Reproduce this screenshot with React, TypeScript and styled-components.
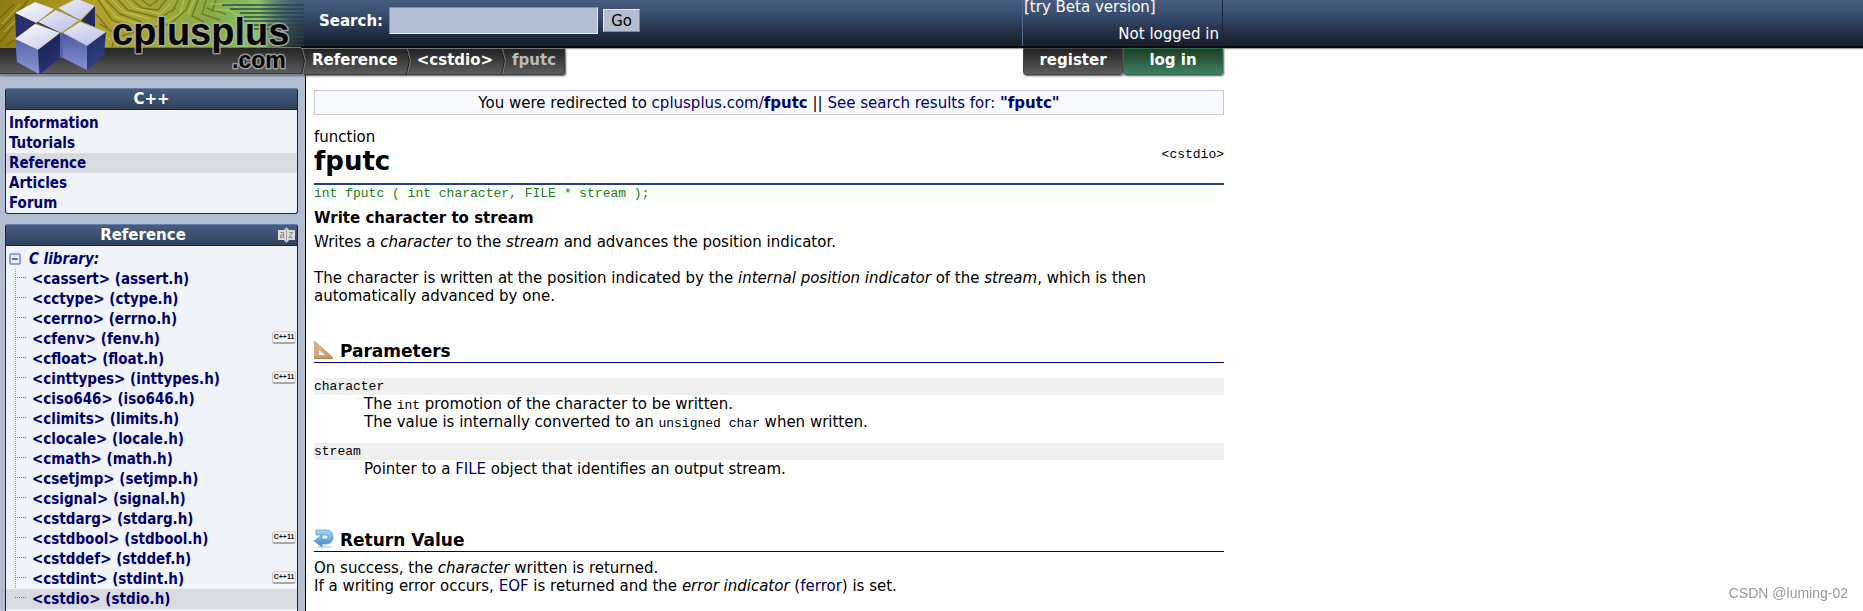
import React from "react";
import styled, { createGlobalStyle } from "styled-components";

const Global = createGlobalStyle`
  * { box-sizing: border-box; }
  body {
    margin: 0;
    background: #fff;
    color: #000;
    font-family: Verdana, "DejaVu Sans", sans-serif;
    font-size: 15px;
    line-height: 18px;
  }
  a { color: #000070; text-decoration: none; }
  h1, h2, h3, p, ul, dl, dd, pre { margin: 0; padding: 0; }
  ul { list-style: none; }
`;

const mono = `font-family: SimSun, "Liberation Mono", monospace; font-size: 13px;`;

const Page = styled.div`
  position: relative;
  display: flex;
  flex-direction: column;
  min-height: 100vh;
`;

const TopBar = styled.header`
  height: 48px;
  background: linear-gradient(#475c80, #364a6b 35%, #17212f 92%, #17212f);
  border-bottom: 2px solid #05070b;
  box-shadow: 0 1px 1px #999;
  color: #fff;
`;

const Inner = styled.div`
  display: flex;
  max-width: 1223px;
  height: 46px;
  padding-left: 319px;
  justify-content: space-between;
`;

const SearchForm = styled.form`
  display: flex;
  align-items: flex-start;
  padding-top: 7px;
  font-weight: bold;
`;

const SearchLabel = styled.label`
  line-height: 28px;
  margin-right: 6px;
`;

const SearchInput = styled.input`
  width: 209px;
  height: 27px;
  background: #b3bfd0;
  border: 1px solid #8a8a8a;
  border-right-color: #e8ecf2;
  border-bottom-color: #e8ecf2;
  border-radius: 0;
`;

const GoButton = styled.button`
  width: 37px;
  height: 23px;
  margin: 2px 0 0 5px;
  padding: 0;
  background: #b3bfd0;
  border: 1px solid #8a8a8a;
  border-top-color: #e8ecf2;
  border-left-color: #e8ecf2;
  font: inherit;
  font-weight: normal;
  line-height: 20px;
`;

const UserBox = styled.div`
  display: flex;
  flex-direction: column;
  width: 201px;
  padding: 0 3px 0 1px;
  border-left: 1px solid #52698f;
  border-right: 1px solid #16243a;
  line-height: 14px;
`;

const BetaLink = styled.a`
  color: #fff;
`;

const LoginState = styled.span`
  align-self: flex-end;
  padding-top: 13px;
`;

const NavBar = styled.nav`
  display: flex;
  justify-content: space-between;
  max-width: 1223px;
  height: 28px;
  margin-bottom: -28px;
  z-index: 1;
`;

const Crumbs = styled.ul`
  display: flex;
  height: 27px;
  padding-left: 301px;
  border: 1px solid #3c3c3c;
  border-left: 0;
  border-top-color: #777;
  border-bottom-right-radius: 3px;
  background: linear-gradient(#222, #5c5c5c);
  box-shadow: 1px 1px 2px #555;
  font-weight: bold;
`;

const Crumb = styled.li<{ $current?: boolean }>`
  display: flex;
  height: 25px;
  line-height: 23px;
  padding-right: 8px;
  color: ${(p) => (p.$current ? "#bbb" : "#fff")};
  a { color: #fff; }
`;

const ChevronSvg = styled.svg`
  width: 5px;
  height: 25px;
  margin-right: 6px;
`;

const Chevron = () => (
  <ChevronSvg viewBox="0 0 5 25" fill="none" aria-hidden="true">
    <path d="M0.5 0 L3.5 12 L0.5 25" stroke="#1a1a1a" />
    <path d="M1.5 0 L4.5 12 L1.5 25" stroke="#777" />
  </ChevronSvg>
);

const Account = styled.div`
  display: flex;
  width: 200px;
`;

const AccountLink = styled.a<{ $green?: boolean }>`
  flex: 1;
  height: 27px;
  border: 1px solid ${(p) => (p.$green ? "#2d6b4a" : "#444")};
  border-radius: 0 0 3px 3px;
  background: ${(p) =>
    p.$green ? "linear-gradient(#1c3d22, #3f8063)" : "linear-gradient(#222, #5c5c5c)"};
  box-shadow: 1px 1px 2px #555;
  color: #fff;
  font-weight: bold;
  line-height: 23px;
  text-align: center;
`;

const LogoLink = styled.a`
  position: absolute;
  top: 0;
  left: 0;
  z-index: 2;
  height: 76px;
`;

const Columns = styled.div`
  display: flex;
  flex: 1;
`;

const Sidebar = styled.aside`
  display: flex;
  flex-direction: column;
  gap: 10px;
  flex: 0 0 306px;
  padding: 40px 7px 0 5px;
  background: #b3bfd0;
  border-right: 1px solid #000;
`;

const Panel = styled.section<{ $fill?: boolean }>`
  flex: ${(p) => (p.$fill ? "1" : "none")};
  border: 1px solid #1b2538;
  border-top: 0;
  border-bottom-width: ${(p) => (p.$fill ? "0" : "1px")};
  border-radius: ${(p) => (p.$fill ? "3px 3px 0 0" : "3px")};
  background: #f0f4f9;
`;

const PanelTitle = styled.h3`
  display: flex;
  align-items: center;
  margin: 0;
  height: 22px;
  padding: 0 2px;
  border-top: 1px solid #6680a5;
  border-bottom: 1px solid #1b2538;
  background: linear-gradient(#475c80, #32435f);
  color: #fff;
  font-size: 15px;
  line-height: 20px;
  span { flex: 1; text-align: center; }
  svg { flex: none; }
`;

const PanelList = styled.ul`
  padding-top: 3px;
  font-family: Tahoma, "DejaVu Sans Condensed", sans-serif;
  font-weight: bold;
`;

const PanelItem = styled.li<{ $active?: boolean; $tree?: boolean }>`
  display: flex;
  align-items: center;
  height: 20px;
  padding: 0 1px 0 ${(p) => (p.$tree ? "9px" : "3px")};
  background: ${(p) => (p.$active ? "#d9dbe0" : "none")};
  a { flex: 1; line-height: 20px; }
`;

const Branch = styled.span`
  align-self: stretch;
  width: 11px;
  height: 9px;
  margin-right: 6px;
  border-bottom: 1px dotted #777;
`;

const Tree = styled.ul`
  background: repeating-linear-gradient(#999 0 1px, transparent 1px 2px) 9px 0 / 1px 100% no-repeat;
`;

const Group = styled.a`
  display: flex;
  align-items: center;
  gap: 8px;
  font-style: italic;
`;

const Badge = styled.span`
  width: 24px;
  height: 13px;
  margin-bottom: 3px;
  border: 1px solid #d0d0d0;
  border-bottom: 2px solid #a8a8a8;
  border-radius: 3px;
  background: #f4f4f4;
  color: #111;
  font: bold 7px/10px "Liberation Sans", sans-serif;
  text-align: center;
`;

const Content = styled.main`
  flex: 1;
  max-width: 918px;
  padding: 42px 0 8px 8px;
`;

const Notice = styled.div`
  height: 25px;
  border: 1px solid #c8c8cc;
  background: #f8f9ff;
  line-height: 24px;
  text-align: center;
`;

const TitleRow = styled.div`
  display: flex;
  justify-content: space-between;
  margin-top: 13px;
  height: 57px;
  border-bottom: 2px solid #24407f;
`;

const Title = styled.h1`
  font-size: 26px;
  line-height: 30px;
`;

const HeaderName = styled.a`
  ${mono}
  margin-top: 18px;
  color: #000;
`;

const Prototype = styled.pre`
  ${mono}
  height: 16px;
  background: #f9fff9;
  color: #2a7a1f;
  line-height: 18px;
`;

const Tagline = styled.p`
  margin-top: 8px;
  font-weight: bold;
`;

const Text = styled.p<{ $top: number }>`
  margin-top: ${(p) => p.$top}px;
`;

const SectionTitle = styled.h2<{ $top: number }>`
  display: flex;
  gap: 6px;
  margin-top: ${(p) => p.$top}px;
  height: 23px;
  border-bottom: 1px solid #000070;
  font-size: 17px;
  line-height: 23px;
`;

const Params = styled.dl`
  padding-top: 15px;
  dt { ${mono} height: 17px; background: #efefef; }
  dd { padding: 0 0 0 50px; margin-bottom: 12px; }
  code { ${mono} line-height: 1; }
`;

const Watermark = styled.span`
  position: fixed;
  right: 15px;
  bottom: 8px;
  color: #999;
  font: 14px/20px "Liberation Sans", sans-serif;
`;

const Logo = () => (
  <svg width="318" height="77" viewBox="0 0 318 77" role="img" aria-label="cplusplus.com">
    <defs>
      <linearGradient id="board" x1="0" x2="1">
        <stop offset="0" stopColor="#8f7c14" />
        <stop offset="0.3" stopColor="#b3a12a" />
        <stop offset="0.5" stopColor="#a3a635" />
        <stop offset="0.7" stopColor="#86ad48" />
        <stop offset="0.85" stopColor="#8cc268" />
        <stop offset="1" stopColor="#3c5c58" stopOpacity="0" />
      </linearGradient>
      <linearGradient id="top" x1="0" y1="0" x2="1" y2="1">
        <stop offset="0" stopColor="#fff" />
        <stop offset="1" stopColor="#b3b8e4" />
      </linearGradient>
      <linearGradient id="left" x1="0" y1="0" x2="0" y2="1">
        <stop offset="0" stopColor="#4d599f" />
        <stop offset="1" stopColor="#8b97dc" />
      </linearGradient>
      <linearGradient id="right" x1="0" y1="0" x2="1" y2="1">
        <stop offset="0" stopColor="#161e50" />
        <stop offset="1" stopColor="#36458c" />
      </linearGradient>
      <linearGradient id="strip" x1="0" y1="0" x2="0" y2="1">
        <stop offset="0" stopColor="#222" />
        <stop offset="1" stopColor="#5c5c5c" />
      </linearGradient>
      <filter id="soft" x="-5%" y="-20%" width="110%" height="140%">
        <feGaussianBlur stdDeviation="0.7" />
      </filter>
    </defs>
    <rect width="305" height="47" fill="url(#board)" />
    <g fill="none" stroke="#5e5c10" strokeOpacity="0.6" strokeWidth="1.500" filter="url(#soft)">
      <path d="M0 30 L22 8 L28 0 M0 42 L14 26 M0 18 L14 4 M6 46 L14 40 M98 0 L112 20 L128 26 M106 0 L120 14 L142 22 M118 0 L128 10 L160 18 L176 8 M132 0 L142 8 L158 10 L166 0 M100 24 L116 34 L112 47 M148 28 L170 24 L186 10 L190 0 M178 0 L172 12 M198 0 L192 16 L204 22 M206 0 L202 14 L220 20 M122 36 L140 30 M142 0 L150 6 L158 0 M96 14 L108 28 M206 8 L226 14 M216 0 L212 12" />
    </g>
    <g fill="none" stroke="#d3d562" strokeOpacity="0.7" filter="url(#soft)">
      <path d="M4 32 L26 10 M2 24 L20 4 M102 0 L116 17 L140 25 M112 0 L124 12 L150 19 M126 0 L135 8 L160 14 L170 4 M184 0 L180 14 L166 22 M210 4 L230 4 L240 9 M214 10 L228 10 L238 15 M194 0 L188 14 M98 32 L110 40" />
    </g>
    <path
      d="M222 5H304M230 9H304M240 13H304M236 17H304M244 21H304M250 25H304M254 29H304M286 33H304M288 37H304M288 41H304M288 45H304"
      stroke="#23434a"
      strokeOpacity="0.7"
      strokeWidth="2"
    />
    <rect y="47" width="301" height="27" fill="url(#strip)" />
    <path d="M0 47.500H301" stroke="#777" />
    <path d="M0 73.500H301" stroke="#3c3c3c" />
    <path d="M0 75H304" stroke="#7c8594" strokeWidth="2" />
    <g strokeLinejoin="round">
      <path d="M15 13 L35 2 L54 9 L36 23Z M58 8 L74 0 H80 L95 6 L80 20Z M38 22 L56 10 L79 20 L61 33Z" fill="url(#top)" />
      <path d="M15 13 L36 23 L35 24 L16 38Z" fill="#28316c" />
      <path d="M95 6 L95 27 L81 21Z" fill="#202962" />
      <path d="M36 23 L38 22 L61 33 H60Z M54 9 L56 10 L80 20 H79Z" fill="#2c3570" />
      <path d="M15 39 L35 24 L60 33 L38 50Z M63 33 L80 22 L106 32 L87 46Z" fill="url(#top)" />
      <path d="M15 39 L38 50 L39 74 L17 62Z M63 33 L87 46 L87 70 L63 58Z" fill="url(#left)" />
      <path d="M38 50 L60 33 L60 58 L40 74Z M87 46 L106 32 L104 55 L87 70Z" fill="url(#right)" />
      <path d="M60 33 H63 V58 H60Z" fill="#5260aa" />
    </g>
    <g
      fontFamily="Liberation Sans, Arial, sans-serif"
      fontWeight="bold"
      fill="#050505"
      stroke="#b4b4b4"
      strokeOpacity="0.8"
      strokeWidth="3"
      strokeLinejoin="round"
      paintOrder="stroke"
    >
      <text x="112" y="45" fontSize="38">cplusplus</text>
      <text x="232" y="68" fontSize="23">.com</text>
    </g>
  </svg>
);

const IndexIcon = () => (
  <svg width="17" height="16" viewBox="0 0 17 16" role="img" aria-label="Index">
    <path d="M0 3 H6 L8.500 0 L11 3 H17 V13 H11 L8.500 16 L6 13 H0Z" fill="#dcdcdc" />
    <path d="M8.500 1V15" stroke="#aaa" />
    <path
      d="M2.500 5.500H5.500V10.500H2.500V8H5.500M11 5.500H14.500L11 10.500H14.500"
      fill="none"
      stroke="#888"
    />
  </svg>
);

const MinusIcon = () => (
  <svg width="12" height="12" viewBox="0 0 12 12" aria-hidden="true">
    <rect x="1" y="1" width="10" height="10" rx="1" fill="#e8edff" stroke="#7484d8" strokeWidth="1.500" />
    <path d="M3 6H9" stroke="#3545a8" strokeWidth="1.500" />
  </svg>
);

const SetSquareIcon = () => (
  <svg width="20" height="20" viewBox="0 0 20 20" aria-hidden="true">
    <defs>
      <linearGradient id="wood" x1="0" y1="0" x2="1" y2="1">
        <stop offset="0" stopColor="#e3bb93" />
        <stop offset="1" stopColor="#c8966a" />
      </linearGradient>
    </defs>
    <path d="M0 0 L19 17 V19 H0Z M5 10 V15 H11Z" fill="url(#wood)" fillRule="evenodd" />
    <path d="M0 18.500H19" stroke="#b07f52" />
    <path d="M2 16v2M5 16v2M8 16v2M11 16v2M14 16v2M1 4h2M1 8h2M1 12h2" stroke="#b98a5e" />
  </svg>
);

const ReturnIcon = () => (
  <svg width="20" height="20" viewBox="0 0 20 20" aria-hidden="true">
    <defs>
      <linearGradient id="sky" x1="0" y1="0" x2="0" y2="1">
        <stop offset="0" stopColor="#a9d6f8" />
        <stop offset="1" stopColor="#3b86cf" />
      </linearGradient>
    </defs>
    <ellipse cx="10" cy="18" rx="8" ry="1.500" fill="#ddd" />
    <path
      d="M2 1 H12 Q19 1 19 8 Q19 15 12 15 H8 V18 L0 12 L8 6 V10 H12 Q14 10 14 8 Q14 6 12 6 H2Z"
      fill="url(#sky)"
      stroke="#5b9edb"
      strokeWidth="0.800"
    />
  </svg>
);

const menu = ["Information", "Tutorials", "Reference", "Articles", "Forum"];

const headers: { name: string; file: string; cpp11?: boolean }[] = [
  { name: "cassert", file: "assert.h" },
  { name: "cctype", file: "ctype.h" },
  { name: "cerrno", file: "errno.h" },
  { name: "cfenv", file: "fenv.h", cpp11: true },
  { name: "cfloat", file: "float.h" },
  { name: "cinttypes", file: "inttypes.h", cpp11: true },
  { name: "ciso646", file: "iso646.h" },
  { name: "climits", file: "limits.h" },
  { name: "clocale", file: "locale.h" },
  { name: "cmath", file: "math.h" },
  { name: "csetjmp", file: "setjmp.h" },
  { name: "csignal", file: "signal.h" },
  { name: "cstdarg", file: "stdarg.h" },
  { name: "cstdbool", file: "stdbool.h", cpp11: true },
  { name: "cstddef", file: "stddef.h" },
  { name: "cstdint", file: "stdint.h", cpp11: true },
  { name: "cstdio", file: "stdio.h" },
];

export default function App() {
  return (
    <Page>
      <Global />
      <TopBar>
        <Inner>
          <SearchForm onSubmit={(e) => e.preventDefault()}>
            <SearchLabel htmlFor="search">Search:</SearchLabel>
            <SearchInput id="search" type="text" />
            <GoButton type="submit">Go</GoButton>
          </SearchForm>
          <UserBox>
            <BetaLink href="#beta">[try Beta version]</BetaLink>
            <LoginState>Not logged in</LoginState>
          </UserBox>
        </Inner>
      </TopBar>
      <NavBar>
        <Crumbs>
          <Crumb><Chevron /><a href="#reference">Reference</a></Crumb>
          <Crumb><Chevron /><a href="#cstdio">&lt;cstdio&gt;</a></Crumb>
          <Crumb $current><Chevron />fputc</Crumb>
        </Crumbs>
        <Account>
          <AccountLink href="#register">register</AccountLink>
          <AccountLink href="#login" $green>log in</AccountLink>
        </Account>
      </NavBar>
      <LogoLink href="#home"><Logo /></LogoLink>

      <Columns>
        <Sidebar>
          <Panel>
            <PanelTitle><span>C++</span></PanelTitle>
            <PanelList>
              {menu.map((m) => (
                <PanelItem key={m} $active={m === "Reference"}>
                  <a href={`#${m.toLowerCase()}`}>{m}</a>
                </PanelItem>
              ))}
            </PanelList>
          </Panel>
          <Panel $fill>
            <PanelTitle><span>Reference</span><IndexIcon /></PanelTitle>
            <PanelList as="div">
              <PanelItem as="div">
                <Group href="#clibrary"><MinusIcon />C library:</Group>
              </PanelItem>
              <Tree>
                {headers.map((h) => (
                  <PanelItem key={h.name} $tree $active={h.name === "cstdio"}>
                    <Branch />
                    <a href={`#${h.name}`}>{`<${h.name}> (${h.file})`}</a>
                    {h.cpp11 && <Badge>C++11</Badge>}
                  </PanelItem>
                ))}
              </Tree>
            </PanelList>
          </Panel>
        </Sidebar>

        <Content>
          <Notice>
            You were redirected to <a href="#fputc">cplusplus.com/<b>fputc</b></a> ||{" "}
            <a href="#results">See search results for: <b>"fputc"</b></a>
          </Notice>
          <TitleRow>
            <div>
              function
              <Title>fputc</Title>
            </div>
            <HeaderName href="#cstdio">&lt;cstdio&gt;</HeaderName>
          </TitleRow>
          <Prototype>int fputc ( int character, FILE * stream );</Prototype>
          <Tagline>Write character to stream</Tagline>
          <Text $top={6}>
            Writes a <i>character</i> to the <i>stream</i> and advances the position indicator.
          </Text>
          <Text $top={18}>
            The character is written at the position indicated by the{" "}
            <i>internal position indicator</i> of the <i>stream</i>, which is then automatically
            advanced by one.
          </Text>
          <SectionTitle $top={35}><SetSquareIcon />Parameters</SectionTitle>
          <Params>
            <dt>character</dt>
            <dd>
              The <code>int</code> promotion of the character to be written.
              <br />
              The value is internally converted to an <code>unsigned char</code> when written.
            </dd>
            <dt>stream</dt>
            <dd>
              Pointer to a <a href="#FILE">FILE</a> object that identifies an output stream.
            </dd>
          </Params>
          <SectionTitle $top={51}><ReturnIcon />Return Value</SectionTitle>
          <Text $top={7}>
            On success, the <i>character</i> written is returned.
            <br />
            If a writing error occurs, <a href="#EOF">EOF</a> is returned and the{" "}
            <i>error indicator</i> (<a href="#ferror">ferror</a>) is set.
          </Text>
        </Content>
      </Columns>
      <Watermark>CSDN @luming-02</Watermark>
    </Page>
  );
}
